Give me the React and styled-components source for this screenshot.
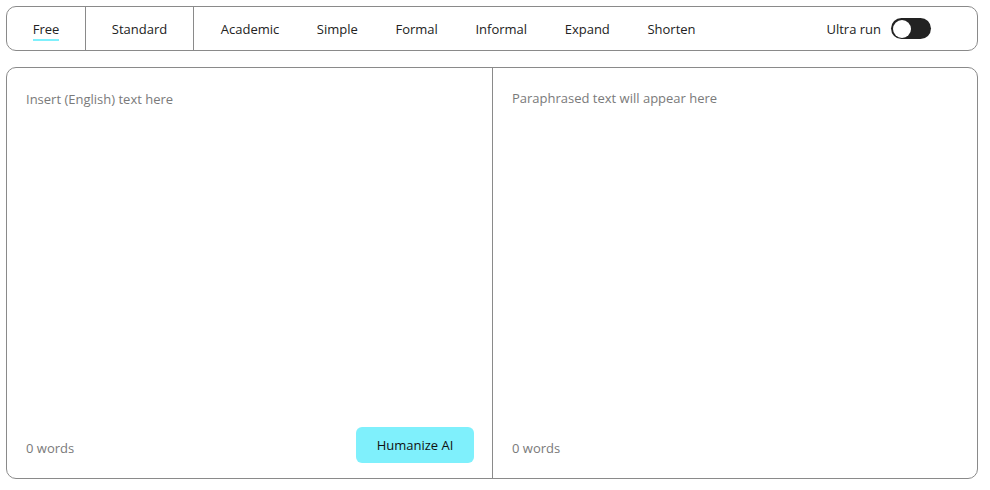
import React, { useState } from 'react'
import styled, { createGlobalStyle } from 'styled-components'

const GlobalStyle = createGlobalStyle`
  html, body {
    margin: 0;
    padding: 0;
    background: #fff;
    font-family: "Open Sans", "Noto Sans", sans-serif;
  }
`

const Page = styled.div`
  width: 990px;
  height: 490px;
  box-sizing: border-box;
  padding: 6px 12px 11px 6px;
  display: flex;
  flex-direction: column;
  gap: 16px;
`

const Toolbar = styled.div`
  height: 45px;
  box-sizing: border-box;
  border: 1px solid #8a8a8a;
  border-radius: 10px;
  display: flex;
  align-items: stretch;
  padding-right: 46px;
`

const ModeCell = styled.div`
  width: ${p => p.$w}px;
  display: flex;
  align-items: center;
  justify-content: center;
  border-right: 1px solid #8a8a8a;
`

const Tabs = styled.div`
  display: flex;
  align-items: center;
  padding-left: 8px;
  flex: 1;
`

const Tab = styled.span`
  font-size: 13px;
  color: #222;
  padding: 0 18.8px;
  cursor: pointer;
`

const ModeLabel = styled.span`
  font-size: 13px;
  color: #222;
  cursor: pointer;
  padding-bottom: 1px;
  border-bottom: ${p => (p.$active ? '2px solid #7ff0fc' : '2px solid transparent')};
  margin-top: 4px;
`

const Ultra = styled.div`
  display: flex;
  align-items: center;
  gap: 10px;
  font-size: 13px;
  color: #222;
`

const Switch = styled.button`
  width: 40px;
  height: 21px;
  border-radius: 11px;
  border: none;
  background: #222;
  padding: 0;
  position: relative;
  cursor: pointer;
`

const Knob = styled.span`
  position: absolute;
  top: 1.5px;
  left: ${p => (p.$on ? '20px' : '1.5px')};
  width: 18px;
  height: 18px;
  border-radius: 50%;
  background: #fff;
`

const Editor = styled.div`
  flex: 1;
  border: 1px solid #8a8a8a;
  border-radius: 10px;
  display: grid;
  grid-template-columns: 485px 1fr;
  overflow: hidden;
`

const Pane = styled.div`
  display: flex;
  flex-direction: column;
  justify-content: space-between;
  padding: ${p => p.$top}px 18px 15px 19px;
  border-left: ${p => (p.$divider ? '1px solid #8a8a8a' : 'none')};
`

const Placeholder = styled.div`
  font-size: 13px;
  color: #7a7a7a;
`

const Footer = styled.div`
  display: flex;
  align-items: center;
  justify-content: space-between;
  height: 36px;
`

const Count = styled.span`
  font-size: 13px;
  color: #7a7a7a;
  margin-top: 6px;
`

const Humanize = styled.button`
  width: 118px;
  height: 36px;
  border: none;
  border-radius: 6px;
  background: #7ff0fc;
  color: #111;
  font-family: inherit;
  font-size: 13px;
  cursor: pointer;
`

const tabs = ['Academic', 'Simple', 'Formal', 'Informal', 'Expand', 'Shorten']

export default function App() {
  const [ultra, setUltra] = useState(false)
  return (
    <>
      <GlobalStyle />
      <Page>
        <Toolbar>
          <ModeCell $w={78}>
            <ModeLabel $active>Free</ModeLabel>
          </ModeCell>
          <ModeCell $w={107}>
            <ModeLabel>Standard</ModeLabel>
          </ModeCell>
          <Tabs>
            {tabs.map(t => (
              <Tab key={t}>{t}</Tab>
            ))}
          </Tabs>
          <Ultra>
            Ultra run
            <Switch onClick={() => setUltra(!ultra)}>
              <Knob $on={ultra} />
            </Switch>
          </Ultra>
        </Toolbar>
        <Editor>
          <Pane $top={22}>
            <Placeholder>Insert (English) text here</Placeholder>
            <Footer>
              <Count>0 words</Count>
              <Humanize>Humanize AI</Humanize>
            </Footer>
          </Pane>
          <Pane $divider $top={21}>
            <Placeholder>Paraphrased text will appear here</Placeholder>
            <Footer>
              <Count>0 words</Count>
            </Footer>
          </Pane>
        </Editor>
      </Page>
    </>
  )
}
